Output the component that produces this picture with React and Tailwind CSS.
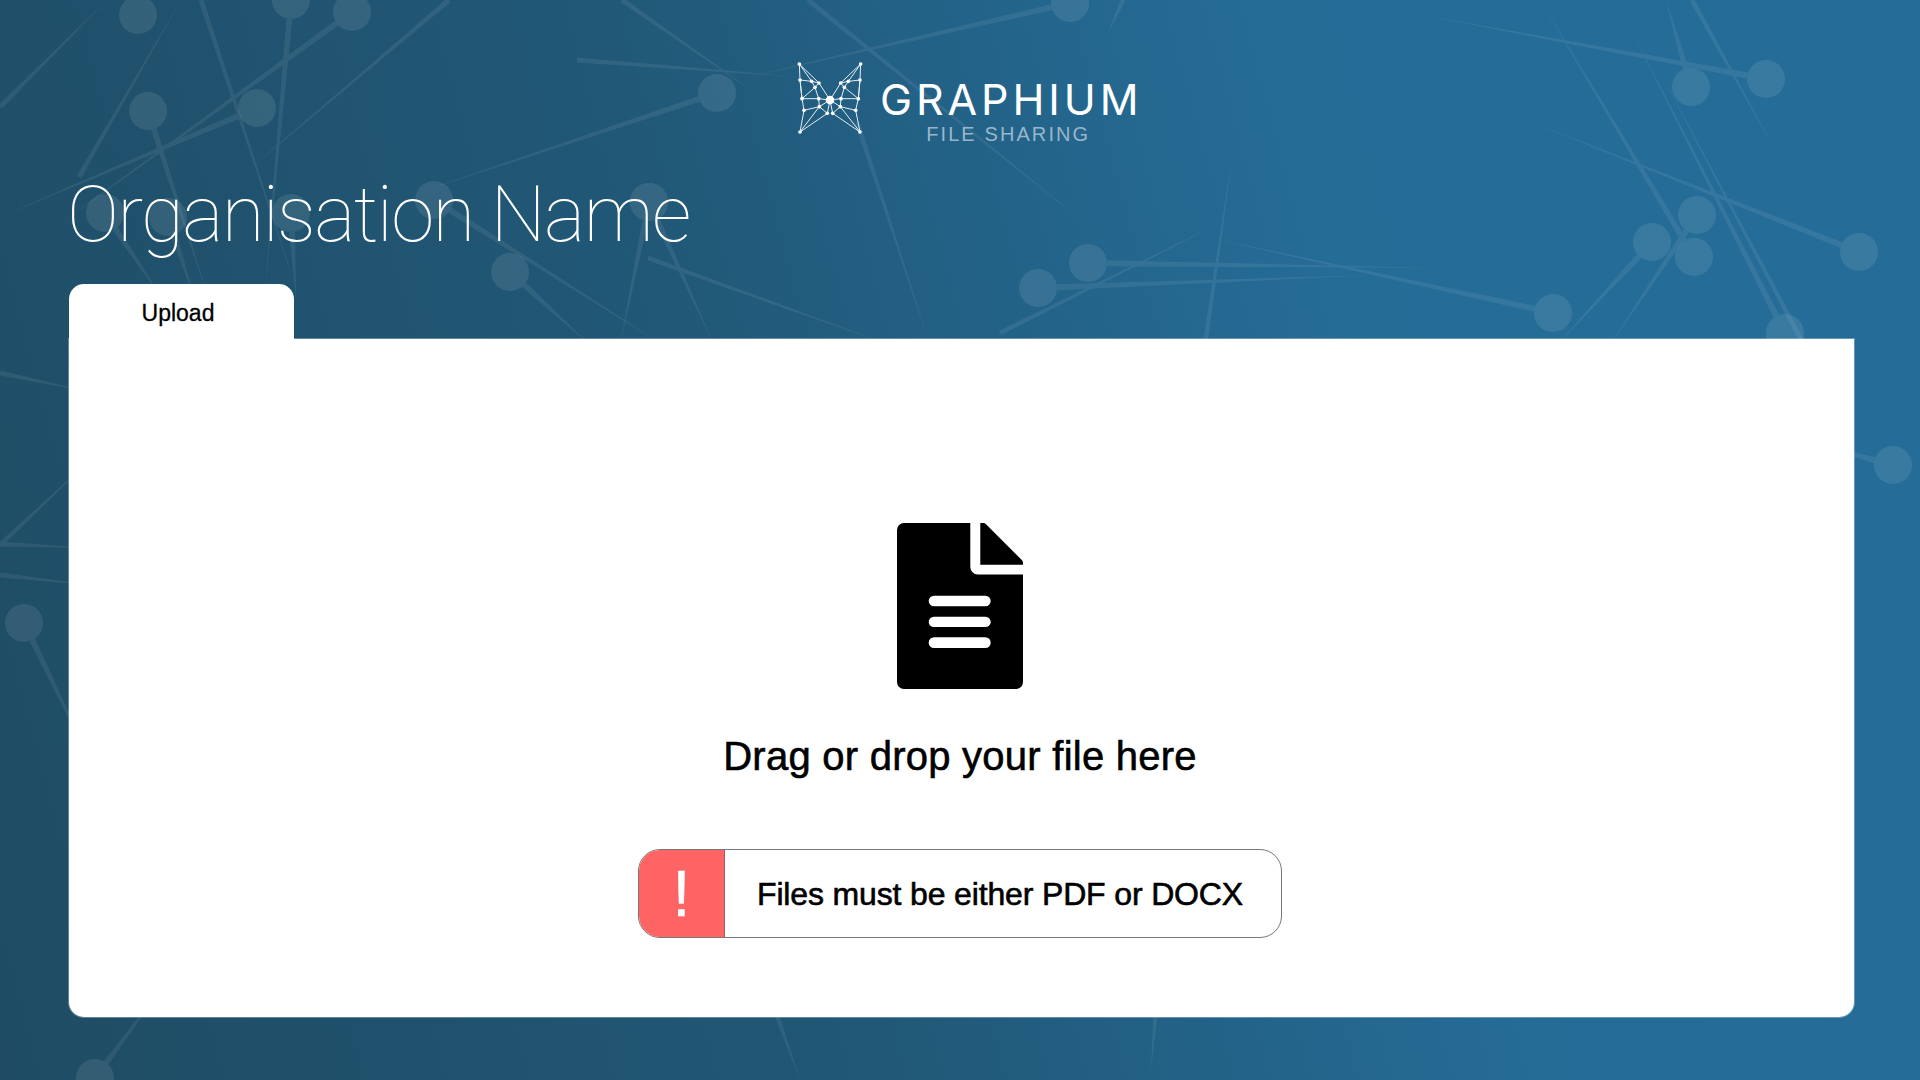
import React from 'react'

// [node x, node y, far x, far y] - far end tapers off; node can be null for bare needles
const pins = [
  [138, 15, null, null], [148, 111, 209, 300], [257, 108, 0, 217], [352, 12, 56, 227],
  [717, 93, 420, 192], [1070, 3, 735, 80], [1766, 79, 1422, 15], [1691, 87, 1666, 0],
  [1694, 257, 1540, 0], [1785, 333, 1631, 30], [1859, 252, 1531, 122], [1697, 215, 1610, 345],
  [1652, 242, 1557, 345], [1088, 263, 1440, 268], [1038, 288, 1375, 275], [1553, 313, 1211, 238],
  [434, 200, 663, 345], [510, 272, 590, 345], [649, 202, 620, 345], [649, 202, 714, 345],
  [105, 213, 163, 300], [168, 217, 195, 300], [291, 213, 296, 300], [291, 0, 265, 290],
  [1893, 465, 1800, 440], [24, 623, 100, 780], [95, 1078, 160, 990],
]

const needles = [
  [0, 107, 107, 0], [79, 177, 181, 0], [201, 0, 300, 300], [449, 0, 245, 173], [622, 0, 755, 93],
  [577, 60, 800, 77], [648, 258, 890, 345], [1123, 0, 1108, 33], [1692, 0, 1774, 148],
  [1804, 345, 1660, 72], [1000, 333, 1220, 223], [1205, 345, 1232, 158], [808, 0, 1091, 228],
  [857, 122, 930, 345], [0, 373, 90, 392], [0, 545, 90, 460], [0, 544, 90, 548], [0, 575, 90, 585],
  [775, 1010, 800, 1080], [1156, 1010, 1151, 1070],
]

function taper(x1, y1, x2, y2, w) {
  const dx = x2 - x1
  const dy = y2 - y1
  const len = Math.hypot(dx, dy)
  const nx = (-dy / len) * w
  const ny = (dx / len) * w
  return `${x1 + nx},${y1 + ny} ${x2},${y2} ${x1 - nx},${y1 - ny}`
}

// start the needle at the rim of its node so it doesn't show through the circle
function fromRim(p) {
  const len = Math.hypot(p[2] - p[0], p[3] - p[1])
  const sx = p[0] + ((p[2] - p[0]) / len) * 19
  const sy = p[1] + ((p[3] - p[1]) / len) * 19
  return taper(sx, sy, p[2], p[3], 3)
}

function Backdrop() {
  return (
    <svg className="absolute inset-0" width="1920" height="1080" viewBox="0 0 1920 1080">
      <g fill="#ffffff" opacity="0.07">
        {pins.map((p, i) => p[2] !== null && <polygon key={i} points={fromRim(p)} />)}
        {needles.map((n, i) => (
          <polygon key={i} points={taper(n[0], n[1], n[2], n[3], 2.5)} />
        ))}
      </g>
      <g fill="#ffffff" opacity="0.09">
        {pins.map((p, i) => (
          <circle key={i} cx={p[0]} cy={p[1]} r="19" />
        ))}
      </g>
    </svg>
  )
}

const logoNodes = [
  [28, 27], [212, 27], [30, 75], [65, 79], [87, 84], [75, 97], [152, 84], [175, 79], [210, 75], [163, 97],
  [36, 131], [86, 131], [153, 131], [205, 131], [42, 166], [88, 155], [151, 155], [197, 166], [112, 175],
  [128, 175], [30, 231], [210, 231],
]

const logoEdges = [
  [0, 2], [0, 3], [0, 4], [2, 3], [3, 4], [3, 5], [4, 5], [2, 10], [5, 10], [5, 11], [4, 22],
  [1, 8], [1, 7], [1, 6], [8, 7], [7, 6], [7, 9], [6, 9], [8, 13], [9, 13], [9, 12], [6, 22],
  [10, 11], [11, 22], [12, 22], [12, 13], [10, 2], [13, 8], [14, 15], [15, 22], [16, 22], [16, 17],
  [14, 20], [15, 20], [15, 18], [18, 20], [17, 21], [16, 21], [16, 19], [19, 21], [14, 10], [17, 13],
  [18, 22], [19, 22], [11, 15], [12, 16],
]

function GraphiumLogo() {
  const pts = [...logoNodes, [120, 135]]
  return (
    <svg width="80" height="85" viewBox="0 0 240 255" className="shrink-0">
      {logoEdges.map(([a, b], i) => (
        <line key={i} x1={pts[a][0]} y1={pts[a][1]} x2={pts[b][0]} y2={pts[b][1]} stroke="#e6eef3" strokeWidth="3" />
      ))}
      {logoNodes.map(([x, y], i) => (
        <circle key={i} cx={x} cy={y} r="5.5" fill="#ffffff" />
      ))}
      <circle cx="120" cy="135" r="13" fill="#ffffff" />
    </svg>
  )
}

function FileIcon() {
  return (
    <svg width="126" height="166" viewBox="0 0 126 166" className="shrink-0">
      <path
        d="M7 0 H73.3 V44 a7.5 7.5 0 0 0 7.5 7.5 H126 V159 a7 7 0 0 1 -7 7 H7 a7 7 0 0 1 -7 -7 V7 a7 7 0 0 1 7 -7 Z"
        fill="#000000"
      />
      <path d="M83.3 0 H86 a4 4 0 0 1 3 1.2 L124.8 37 a4 4 0 0 1 1.2 3 V41.7 H83.3 Z" fill="#000000" />
      <rect x="31.7" y="72.7" width="62" height="10.6" rx="5.3" fill="#ffffff" />
      <rect x="31.7" y="93.7" width="62" height="10.4" rx="5.2" fill="#ffffff" />
      <rect x="31.7" y="114.3" width="62" height="10.7" rx="5.3" fill="#ffffff" />
    </svg>
  )
}

export default function App() {
  return (
    <div className="relative w-[1920px] h-[1080px] overflow-hidden bg-[linear-gradient(75deg,#1f4c64_0%,#215877_40%,#256c97_70%,#256d98_100%)] font-['Liberation_Sans',sans-serif]">
      <Backdrop />
      <div className="relative flex flex-col pt-[55px] pl-[69px]">
        <div className="flex items-start pl-[721px] gap-[10px] h-[85px]">
          <GraphiumLogo />
          <div className="flex flex-col items-center pt-[23px]">
            <span className="font-['Inter',sans-serif] text-[43px] leading-[43px] text-white tracking-[3.9px]">GRAPHIUM</span>
            <span className="mt-[1px] pr-[6px] text-[20px] leading-[24px] tracking-[2.1px] text-[#98b6ca]">FILE SHARING</span>
          </div>
        </div>

        <h1 className="mt-[30px] -ml-[2px] font-['Roboto',sans-serif] font-thin text-[78px] leading-[90px] tracking-[-1.65px] text-white">Organisation Name</h1>

        <div className="relative z-10 mt-[24px] w-[225px] h-[55px] rounded-t-[15px] bg-white flex justify-center pt-[15px] pr-[7px]">
          <span className="text-[23px] leading-[28px] text-black [-webkit-text-stroke:0.3px_#000000]">Upload</span>
        </div>

        <div className="w-[1785px] h-[678px] rounded-b-[15px] bg-white shadow-[0_0_0_1px_rgba(255,255,255,0.3)] flex flex-col items-center pt-[184px] pr-[3px]">
          <FileIcon />
          <div className="mt-[45px] text-[40px] leading-[44px] tracking-[0.25px] text-black [-webkit-text-stroke:0.6px_#000000]">Drag or drop your file here</div>
          <div className="mt-[71px] w-[644px] h-[89px] rounded-[22px] border border-[#777777] flex overflow-hidden">
            <div className="w-[86px] bg-[#ff6464] border-r border-[#a85a5a] flex items-center justify-center text-white text-[64px] leading-none [-webkit-text-stroke:0.5px_#ffffff]">!</div>
            <div className="flex-1 flex items-center pl-[32px] text-[32px] tracking-[-0.15px] text-black [-webkit-text-stroke:0.6px_#000000]">Files must be either PDF or DOCX</div>
          </div>
        </div>
      </div>
    </div>
  )
}
